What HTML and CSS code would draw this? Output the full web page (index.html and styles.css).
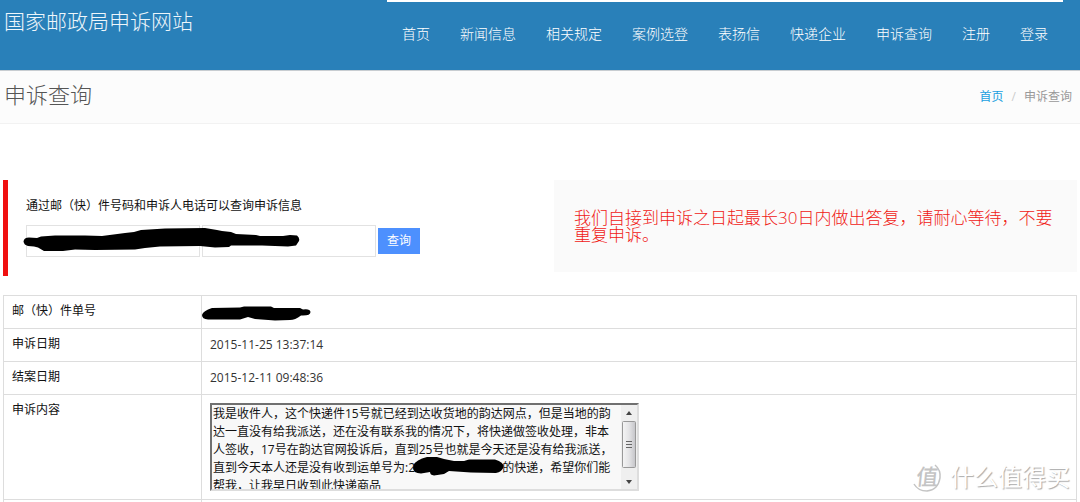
FILE: index.html
```html
<!DOCTYPE html>
<html lang="zh-CN">
<head>
<meta charset="utf-8">
<title>申诉查询</title>
<link rel="stylesheet" href="styles.css">
</head>
<body>
<header class="site-header">
  <a class="brand" href="#">国家邮政局申诉网站</a>
  <nav class="main-nav">
    <a href="#">首页</a>
    <a href="#">新闻信息</a>
    <a href="#">相关规定</a>
    <a href="#">案例选登</a>
    <a href="#">表扬信</a>
    <a href="#">快递企业</a>
    <a href="#">申诉查询</a>
    <a href="#">注册</a>
    <a href="#">登录</a>
  </nav>
</header>
<div class="page-head">
  <h1>申诉查询</h1>
  <div class="breadcrumb"><a href="#">首页</a><span class="sep">/</span><span>申诉查询</span></div>
</div>
<main class="content">
  <section class="top">
    <form class="search">
      <label for="mail-no">通过邮（快）件号码和申诉人电话可以查询申诉信息</label>
      <div class="fields">
        <input id="mail-no" type="text">
        <input type="text" aria-label="申诉人电话">
        <button type="button">查询</button>
      </div>
      <svg class="mask mask-form" width="280" height="26" viewBox="22 226 280 26" aria-hidden="true"><path d="M23.5 241.5Q24 237.500 29 237.500L37 238 41 236.500 55 235.500 85 235.500 102 236 125 233 134 232 141 230 165 228.500 205 228 217 230 222 231 231 232 236 234 256 235 260 236 283 236 290 235 297 235.500Q300 238 299 241L296 245.500 288 246.500 262 245.500 231 245.500 229 247 215 247.500 200 246 160 246.500 145 248 135 249.500 95 250 75 249.500 63 251 44 251 38 247.500 34 246.500 28 246Q24 245 23.500 241.500Z"/></svg>
    </form>
    <p class="notice">我们自接到申诉之日起最长30日内做出答复，请耐心等待，不要重复申诉。</p>
  </section>
  <table class="detail">
    <tr>
      <th scope="row">邮（快）件单号</th>
      <td><svg class="mask mask-number" width="112" height="18" viewBox="200 305 112 18" aria-hidden="true"><path d="M202 315Q203 311 212 308L240 307.500 244 306.500 271 306.500 274 308 300 308 303 309.500Q310 308.500 310.500 312Q310.500 316 301 315.500Q295 320 290 320L275 320.500 255 319 248 317 240 319.500 208 319.500Q202 319 202 315Z"/></svg></td>
    </tr>
    <tr><th scope="row">申诉日期</th><td>2015-11-25 13:37:14</td></tr>
    <tr><th scope="row">结案日期</th><td>2015-12-11 09:48:36</td></tr>
    <tr>
      <th scope="row"><label for="complaint">申诉内容</label></th>
      <td>
        <div class="text-box">
          <textarea id="complaint" rows="5" readonly>我是收件人，这个快递件15号就已经到达收货地的韵达网点，但是当地的韵
达一直没有给我派送，还在没有联系我的情况下，将快递做签收处理，非本
人签收，17号在韵达官网投诉后，直到25号也就是今天还是没有给我派送，
直到今天本人还是没有收到运单号为:2　　　　　　　&nbsp;的快递，希望你们能
帮我，让我早日收到此快递商品</textarea>
          <svg class="scroller" width="16" height="84" viewBox="0 0 16 84" aria-hidden="true">
            <defs><linearGradient id="thumb"><stop offset="0" stop-color="#f5f5f5"/><stop offset=".5" stop-color="#e4e4e6"/><stop offset="1" stop-color="#c4c4c8"/></linearGradient></defs>
            <path fill="#efefef" d="M0 0h16v84H0z"/>
            <path fill="#444" d="M5 10l3-4 3 4zM5 75l3 4 3-4z"/>
            <rect x="1.5" y="16.500" width="13" height="46" rx="1" fill="url(#thumb)" stroke="#999"/>
            <path stroke="#666" d="M5 36.500h6M5 39.500h6M5 42.500h6"/>
          </svg>
          <svg class="mask mask-text" width="94" height="20" viewBox="411 455 94 20" aria-hidden="true"><path d="M412 467Q412 461 421 457.500L426 456 436 456 443 458 453 460 463 460 468 458.500 494 458.500Q503 461 502.500 466Q501 471 495 472L470 471.500 448 470 443 473 433 474.500Q429 474 429 471L420 472.500Q412 472 412 467Z"/></svg>
        </div>
      </td>
    </tr>
    <tr class="tail"><th scope="row"></th><td></td></tr>
  </table>
</main>
<div class="watermark">
  <svg width="32" height="32" viewBox="0 0 32 32" aria-hidden="true">
    <path fill="none" stroke="#c4c4c4" stroke-width="1.500" d="M24 4Q30 9 29 17Q27 29 16 30Q7 30 3 23"/>
    <text class="seal" x="5" y="24" transform="skewX(-6) translate(2 0)">值</text>
  </svg>
  <span>什么值得买</span>
</div>
</body>
</html>
```
FILE: styles.css
```css
* { box-sizing: border-box; }
body {
  margin: 0;
  position: relative;
  background: #fff;
  color: #111;
  font: 12px/16px "Open Sans", "Noto Sans CJK SC", sans-serif;
}
a { text-decoration: none; }
.site-header {
  display: flex;
  justify-content: space-between;
  height: 71px;
  padding: 0 17px 0 4px;
  background: #2980b9;
  border-bottom: 1px solid #c8cdd1;
}
.brand {
  padding-top: 7px;
  color: #eef6fb;
  font-size: 21px;
  line-height: 28px;
  font-weight: 300;
}
.main-nav {
  display: flex;
  align-self: flex-start;
  border-top: 2px solid #fff;
  padding-top: 22px;
}
.main-nav a {
  padding: 0 15px;
  color: #fff;
  font-size: 14px;
  line-height: 20px;
  font-weight: 300;
}
.page-head {
  display: flex;
  justify-content: space-between;
  align-items: center;
  height: 53px;
  padding: 0 8px 0 4px;
  background: #fcfcfc;
  border-bottom: 1px solid #f2f2f2;
}
.page-head h1 {
  margin: 0;
  padding-bottom: 6px;
  color: #555;
  font-size: 22px;
  line-height: 28px;
  font-weight: 300;
}
.breadcrumb { color: #999; }
.breadcrumb a { color: #1a9fe0; }
.breadcrumb .sep { padding: 0 8px; color: #ccc; }
.content { padding: 56px 3px 0; }
.top {
  display: grid;
  grid-template-columns: 1fr 1fr;
  gap: 28px;
  align-items: start;
  margin-bottom: 19px;
}
.search {
  position: relative;
  height: 96px;
  padding: 18px 0 0 18px;
  border-left: 5px solid #f01010;
}
.fields {
  display: flex;
  align-items: center;
  gap: 2px;
  margin-top: 11px;
}
.fields input {
  width: 174px;
  height: 32px;
  padding: 4px 6px;
  border: 1px solid #e2e2e2;
  background: #fff;
  font: inherit;
}
.fields button {
  height: 26px;
  padding: 0 9px;
  border: 0;
  background: #4d90fe;
  color: #fff;
  font: inherit;
}
.mask { position: absolute; fill: #000; }
.mask-form { left: 14px; top: 46px; }
.mask-number { left: -2px; top: 9px; }
.mask-text { left: 200px; top: 51px; }
.notice {
  margin: 0;
  padding: 29px 20px;
  background: #fafafa;
  color: #f02015;
  font-size: 17px;
  line-height: 17px;
  font-weight: 300;
}
.detail {
  width: 100%;
  border-collapse: collapse;
  border: 1px solid #ddd;
  border-bottom: 0;
}
.detail th, .detail td {
  position: relative;
  height: 33px;
  padding: 8px;
  border: 1px solid #ddd;
  text-align: left;
  vertical-align: top;
  font-weight: 400;
}
.detail th { width: 198px; padding-top: 7px; }
.detail td { color: #333; }
.detail .tail th, .detail .tail td {
  height: 2px;
  padding: 0;
  border-bottom: 0;
}
.text-box {
  position: relative;
  display: flex;
  width: 429px;
  border: 2px solid #ddd;
  border-top-color: #707070;
  border-left-color: #707070;
  background: #f8f8f8;
}
.text-box textarea {
  flex: 1;
  min-width: 0;
  height: 84px;
  padding: 0 0 0 1px;
  border: 0;
  resize: none;
  overflow: hidden;
  white-space: pre;
  background: transparent;
  color: #111;
  font: inherit;
  line-height: 18px;
}
.watermark {
  position: absolute;
  right: 10px;
  bottom: 9px;
  display: flex;
  align-items: center;
  gap: 7px;
  color: #fff;
  font-size: 24px;
  line-height: 32px;
  text-shadow: 1px 1px 1px #aaa;
}
.seal { fill: #c4c4c4; font-size: 22px; font-weight: 500; text-shadow: none; }
```
